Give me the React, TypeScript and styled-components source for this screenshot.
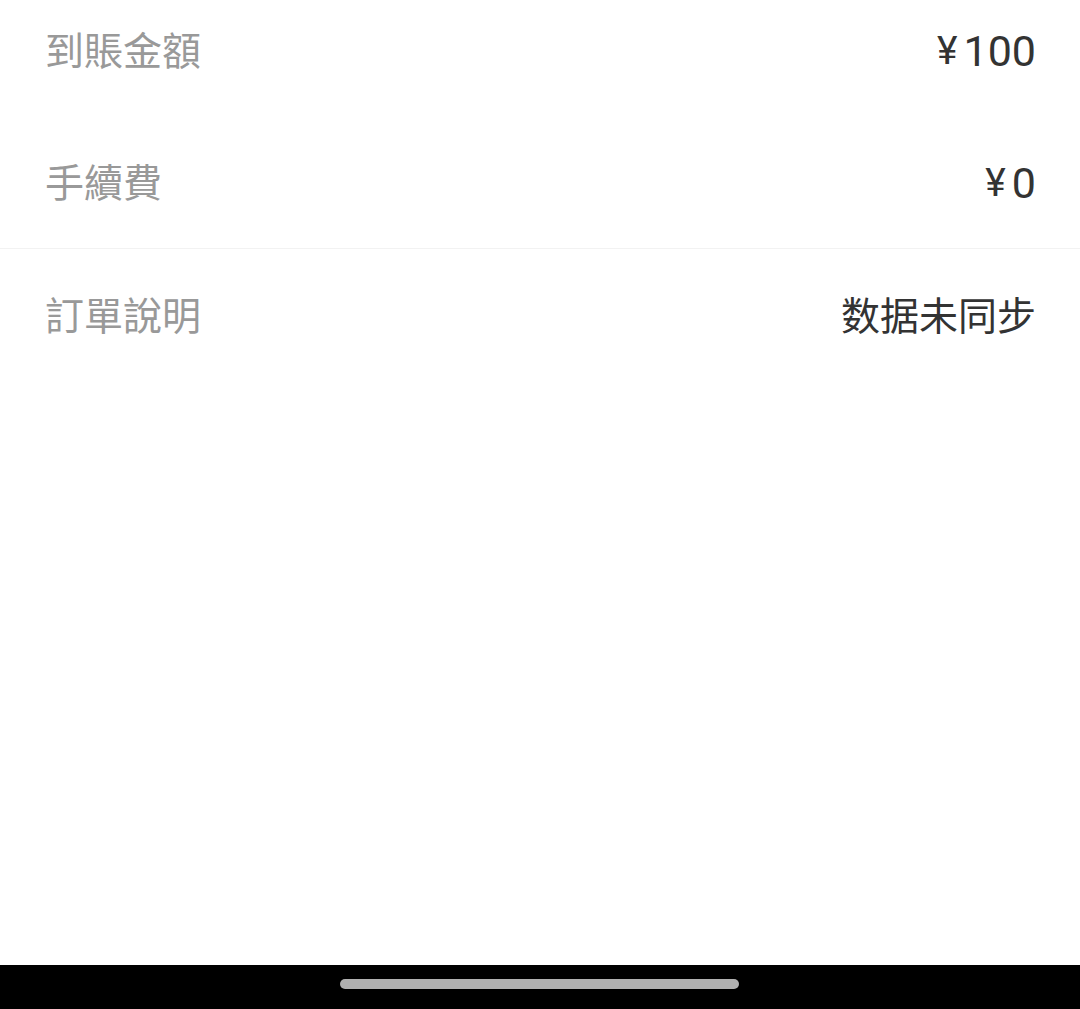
import styled, { createGlobalStyle } from "styled-components";

const GlobalStyle = createGlobalStyle`
  html, body {
    margin: 0;
    padding: 0;
    background: #ffffff;
  }
  body {
    font-family: "Noto Sans CJK TC", "Noto Sans CJK SC", sans-serif;
  }
`;

const Page = styled.div`
  width: 1080px;
  height: 1009px;
  display: flex;
  flex-direction: column;
  background: #ffffff;
  overflow: hidden;
`;

const Content = styled.div`
  flex: 1;
  display: flex;
  flex-direction: column;
`;

const Section = styled.div<{ $divider?: boolean }>`
  display: flex;
  flex-direction: column;
  gap: 32px;
  padding-bottom: ${(p) => (p.$divider ? "16px" : "0")};
  border-bottom: ${(p) => (p.$divider ? "1px solid #f2f2f2" : "none")};
`;

const Row = styled.div<{ $height: number }>`
  box-sizing: border-box;
  height: ${(p) => p.$height}px;
  padding: 0 44px 4px 45px;
  display: flex;
  align-items: center;
  justify-content: space-between;
  font-size: 39px;
  line-height: 1;
`;

const Label = styled.span`
  color: #999999;
  font-family: "Noto Sans CJK TC", sans-serif;
`;

const Text = styled.span`
  color: #333333;
  font-family: "Noto Sans CJK SC", sans-serif;
`;

const Amount = styled.span`
  display: flex;
  align-items: center;
  margin-top: 6px;
  color: #333333;
  font-family: Roboto, "Noto Sans", sans-serif;
  font-size: 43px;
`;

const Yen = styled.span`
  font-size: 39px;
  margin-right: 6px;
`;

const NavBar = styled.div`
  height: 44px;
  background: #000000;
  display: flex;
  justify-content: center;
  align-items: center;
`;

const HomeIndicator = styled.div`
  width: 399px;
  height: 10px;
  border-radius: 5px;
  background: #b1b1b1;
  margin: 0 0 6px -1px;
`;

export default function App() {
  return (
    <>
      <GlobalStyle />
      <Page>
        <Content>
          <Section $divider>
            <Row $height={100}>
              <Label>到賬金額</Label>
              <Amount>
                <Yen>¥</Yen>100
              </Amount>
            </Row>
            <Row $height={100}>
              <Label>手續費</Label>
              <Amount>
                <Yen>¥</Yen>0
              </Amount>
            </Row>
          </Section>
          <Section>
            <Row $height={132}>
              <Label>訂單說明</Label>
              <Text>数据未同步</Text>
            </Row>
          </Section>
        </Content>
        <NavBar>
          <HomeIndicator />
        </NavBar>
      </Page>
    </>
  );
}
